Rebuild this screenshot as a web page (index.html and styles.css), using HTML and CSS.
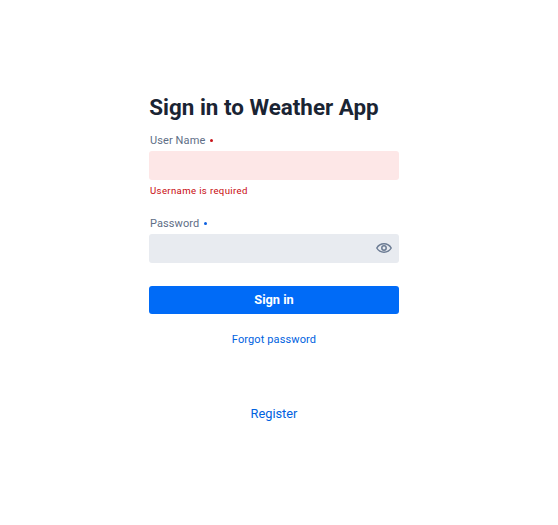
FILE: index.html
```html
<!DOCTYPE html>
<html lang="en">
<head>
<meta charset="utf-8">
<title>Sign in to Weather App</title>
<link rel="stylesheet" href="styles.css">
</head>
<body>
<main class="login">
  <h1 class="title">Sign in to Weather App</h1>
  <form class="form" novalidate>
    <div class="field field-invalid">
      <label class="label" for="user">User Name <span class="dot"></span></label>
      <div class="input-wrap"><input class="input" id="user" type="text"></div>
      <p class="error">Username is required</p>
    </div>
    <div class="field field-password">
      <label class="label" for="pass">Password <span class="dot"></span></label>
      <div class="input-wrap">
        <input class="input" id="pass" type="password">
        <svg class="eye" viewBox="0 0 16 16" fill="none" stroke="currentColor" stroke-width="1.5"><path d="M.8 8C2.400 5.200 4.900 3.800 8 3.800S13.600 5.200 15.200 8C13.600 10.800 11.100 12.200 8 12.200S2.400 10.800 .8 8Z"/><circle cx="8" cy="8" r="2.200"/></svg>
      </div>
    </div>
    <button class="submit" type="button">Sign in</button>
  </form>
  <a class="forgot" href="#">Forgot password</a>
  <a class="register" href="#">Register</a>
</main>
</body>
</html>
```
FILE: styles.css
```css
* { box-sizing: border-box; }
body { margin: 0; background: #fff; font-family: Roboto, sans-serif; }
.login { width: 250px; margin-left: 149px; padding-top: 94px; display: flex; flex-direction: column; }
.title { margin: 0; padding-left: .3px; font-size: 22.4px; line-height: 27px; font-weight: 700; color: #1a2433; white-space: nowrap; }
.form { display: flex; flex-direction: column; padding-top: 11px; }
.label { display: flex; align-items: center; gap: 4.600px; height: 16px; margin-bottom: 3px; padding-left: 1px; font-size: 11px; letter-spacing: .1px; color: #5e6e86; }
.dot { width: 3px; height: 3px; border-radius: 50%; background: #0b5fe0; }
.field-invalid .dot { background: #c8141a; }
.input-wrap { position: relative; display: flex; height: 29px; border-radius: 3px; background: #e8ebf0; }
.input { flex: 1; min-width: 0; border: 0; padding: 0 8px; background: transparent; font: inherit; outline: 0; }
.field-invalid .input-wrap { background: #fde7e7; }
.error { margin: 4px 0 0 1px; font-size: 9.6px; line-height: 13px; letter-spacing: .36px; color: #c80a0e; }
.field-password { margin-top: 18px; }
.eye { position: absolute; right: 7px; top: 6px; width: 16px; height: 16px; color: #6b7b93; }
.submit { height: 28px; margin-top: 23px; padding: 0; border: 0; border-radius: 3px; background: #006bf7; color: #fff; font: 700 12.8px/28px Roboto, sans-serif; }
.forgot, .register { align-self: center; color: #0062e0; text-decoration: none; }
.forgot { margin-top: 18px; font-size: 11px; line-height: 16px; letter-spacing: .12px; }
.register { margin-top: 57px; font-size: 12.8px; line-height: 18px; }
```
